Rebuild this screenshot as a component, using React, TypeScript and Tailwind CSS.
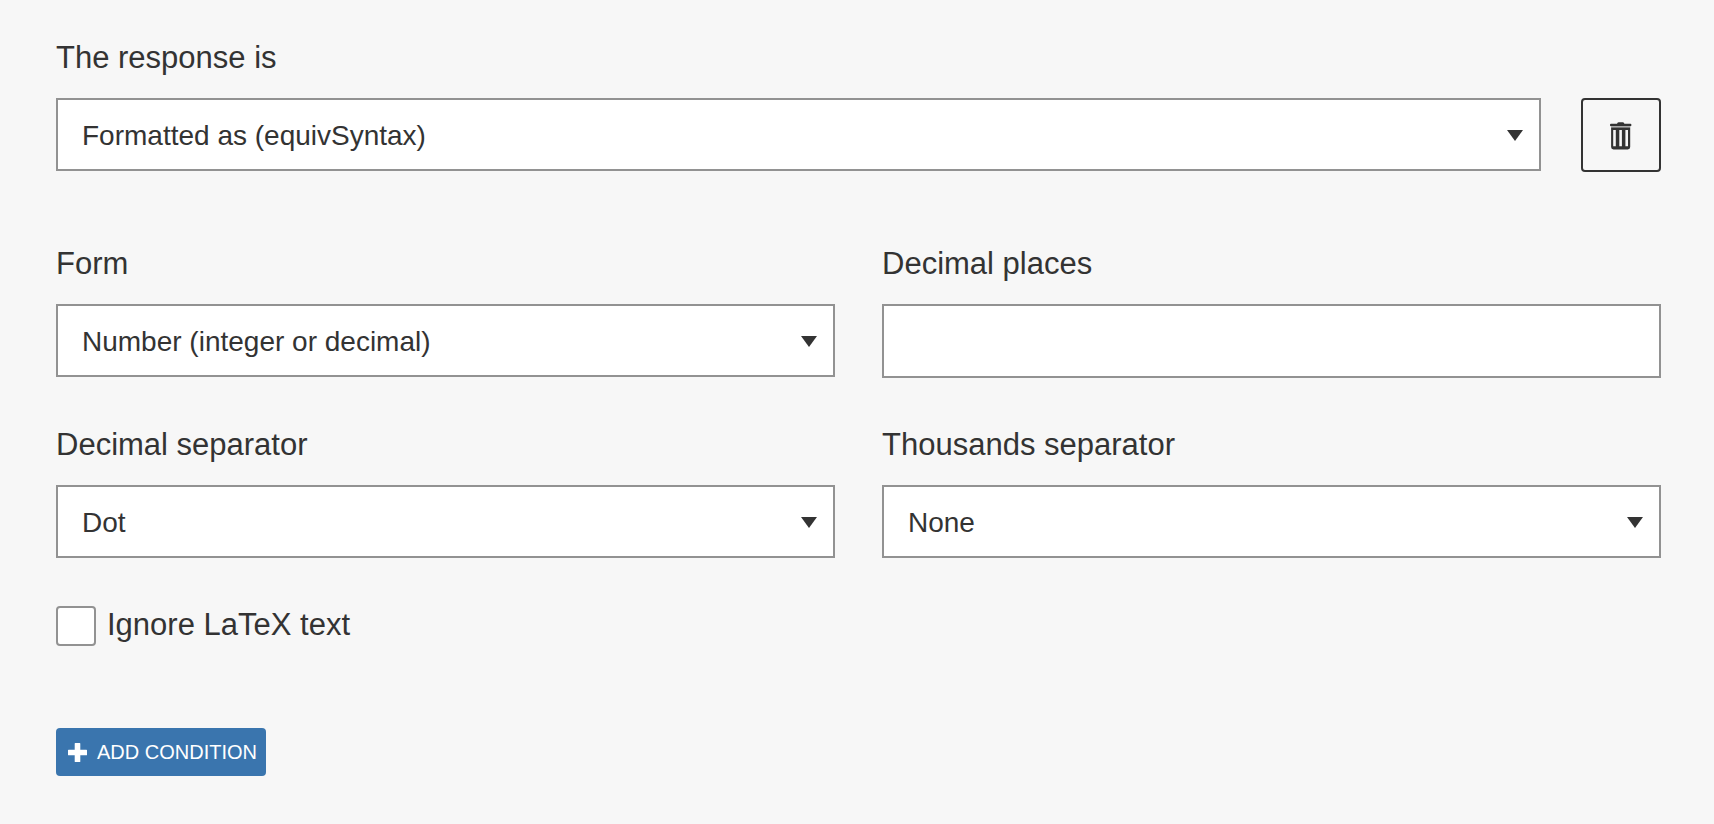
import React, { useState } from "react";

interface SelectFieldProps {
  id: string;
  label: string;
  options: string[];
}

const labelClass = "block text-[31px] leading-[44px] mb-[18px]";
const boxClass =
  "block w-full border-2 border-[#929292] bg-white px-6 text-[28px] text-[#333333] rounded-none outline-none";

const SelectField: React.FC<SelectFieldProps> = ({ id, label, options }) => {
  const [value, setValue] = useState<string>(options[0]);

  return (
    <div className="min-w-0 flex-1">
      <label htmlFor={id} className={labelClass}>
        {label}
      </label>
      <div className="relative min-h-[74px]">
        <select
          id={id}
          value={value}
          onChange={(e) => setValue(e.target.value)}
          className={`${boxClass} h-[73px] appearance-none pt-0.5`}
        >
          {options.map((option) => (
            <option key={option}>{option}</option>
          ))}
        </select>
        <svg
          viewBox="0 0 16 11"
          className="pointer-events-none absolute inset-y-0 right-[18px] my-auto h-[11px] w-4"
          aria-hidden="true"
        >
          <path d="M0 0h16L8 11z" fill="#333333" />
        </svg>
      </div>
    </div>
  );
};

const TrashIcon: React.FC = () => (
  <svg viewBox="0 -2 22 30" className="h-[30px] w-[22px]" aria-hidden="true">
    <path d="M7.2 2V1.2Q7.7.3 8.7.3h4q1 0 1.5.9V2z" fill="#333333" />
    <rect x="0" y="1.8" width="21.4" height="2.4" rx="1" fill="#333333" />
    <rect x="1.1" y="4.2" width="19.1" height="1.4" fill="#a3a3a3" />
    <path
      fillRule="evenodd"
      d="M1.1 5.6h19.1v19.4q0 2.4-2.4 2.4H3.5q-2.4 0-2.4-2.4zM3.2 8v16.2h2.6V8zm6.1 0v16.2h2.6V8zm6.1 0v16.2H18V8z"
      fill="#333333"
    />
  </svg>
);

const PlusIcon: React.FC = () => (
  <svg viewBox="0 0 19 19" className="h-[19px] w-[19px]" aria-hidden="true">
    <path
      d="M7.3 0h4.4q.6 0 .6.6v6.1h6.1q.6 0 .6.6v4.4q0 .6-.6.6h-6.1v6.1q0 .6-.6.6H7.3q-.6 0-.6-.6v-6.1H.6q-.6 0-.6-.6V7.3q0-.6.6-.6h6.1V.6q0-.6.6-.6z"
      fill="currentColor"
    />
  </svg>
);

const App: React.FC = () => {
  const [places, setPlaces] = useState<string>("");
  const [ignoreText, setIgnoreText] = useState<boolean>(false);

  return (
    <div className="min-h-screen bg-[#f7f7f7] pt-9 pr-[53px] pb-12 pl-14 font-['Liberation_Sans',Arial,sans-serif] text-[#333333]">
      <div className="flex items-end gap-10">
        <SelectField
          id="response"
          label="The response is"
          options={["Formatted as (equivSyntax)", "Equivalent to (equivSymbolic)"]}
        />
        <button
          type="button"
          aria-label="Delete condition"
          className="flex h-[74px] w-20 items-center justify-center rounded border-2 border-[#333333]"
        >
          <TrashIcon />
        </button>
      </div>

      <div className="mt-[70px] grid grid-cols-2 gap-x-[47px] gap-y-[45px]">
        <SelectField
          id="form"
          label="Form"
          options={["Number (integer or decimal)", "Scientific notation", "Fraction"]}
        />
        <div>
          <label htmlFor="places" className={labelClass}>
            Decimal places
          </label>
          <input
            id="places"
            type="text"
            value={places}
            onChange={(e) => setPlaces(e.target.value)}
            className={`${boxClass} h-[74px]`}
          />
        </div>
        <SelectField id="decimal" label="Decimal separator" options={["Dot", "Comma"]} />
        <SelectField id="thousands" label="Thousands separator" options={["None", "Comma", "Space"]} />
      </div>

      <div className="mt-[47px] flex items-start gap-[11px]">
        <input
          id="ignore"
          type="checkbox"
          checked={ignoreText}
          onChange={(e) => setIgnoreText(e.target.checked)}
          className="h-10 w-10 appearance-none rounded border-2 border-[#929292] bg-white checked:bg-[#3a75ae]"
        />
        <label htmlFor="ignore" className="text-[31px] leading-[38px]">
          Ignore LaTeX text
        </label>
      </div>

      <button
        type="button"
        className="mt-[82px] flex h-12 items-center gap-2.5 rounded bg-[#3a75ae] pr-[9px] pl-3 text-xl text-white uppercase"
      >
        <PlusIcon />
        Add condition
      </button>
    </div>
  );
};

export default App;
